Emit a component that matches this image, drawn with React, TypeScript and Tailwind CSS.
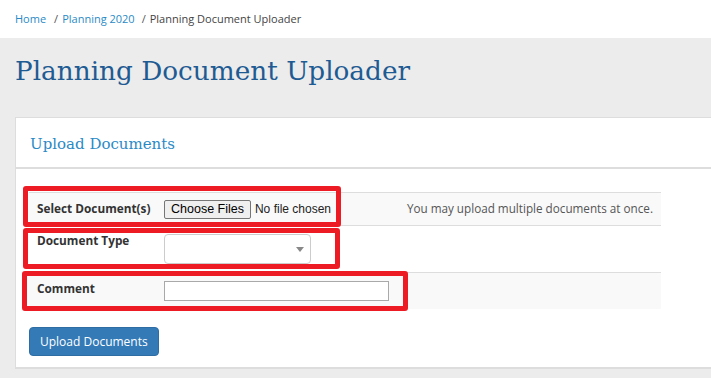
export default function App() {
  return (
    <div className="relative min-h-[378px] w-full overflow-hidden bg-[#ececec] font-['Open_Sans',sans-serif]">
      {/* breadcrumb */}
      <div className="h-[38px] bg-white px-[15px] pt-[11px] text-[11px] text-[#444]">
        <a className="text-[#2a8ac6]">Home</a>
        <span className="pl-[8px] pr-[4px] text-[#555]">/</span>
        <a className="text-[#2a8ac6]">Planning 2020</a>
        <span className="pl-[7px] pr-[4px] text-[#555]">/</span>
        <span>Planning Document Uploader</span>
      </div>

      <div className="h-[79px] px-[15px] pt-[13px]">
        <h1 className="font-['DejaVu_Serif',serif] text-[26.3px] font-normal leading-[40px] text-[#1f5b93]">
          Planning Document Uploader
        </h1>
      </div>

      {/* card */}
      <div className="ml-[15px] w-[760px] border-t border-l border-[#dddddd] border-b-2 bg-white">
        <div className="h-[51px] border-b-2 border-[#dddddd] pl-[14px] pt-[15px]">
          <h2 className="font-['DejaVu_Serif',serif] text-[15px] leading-[22px] text-[#2a8ac6]">Upload Documents</h2>
        </div>

        <div className="px-[13px] pt-[23px] pb-[11px]">
          <table className="w-[632px] border-collapse text-[11.8px] text-[#333]">
            <tbody>
              <tr className="h-[33px] border-t border-b border-[#dddddd] bg-[#f9f9f9]">
                <td className="w-[135px] px-[8px] font-bold">Select Document(s)</td>
                <td className="px-0 py-[6px]">
                  <div className="flex items-center gap-[4px] font-['Liberation_Sans',sans-serif] text-[12.5px]">
                    <span className="flex h-[19px] items-center rounded-[2px] border border-[#767676] bg-[#efefef] px-[6px] text-black">
                      Choose Files
                    </span>
                    <span className="text-[12px] text-[#222]">No file chosen</span>
                  </div>
                </td>
                <td className="px-[8px] text-right text-[11.7px] text-[#555]">You may upload multiple documents at once.</td>
              </tr>
              <tr className="h-[46px] border-b border-[#dddddd] bg-white">
                <td className="px-[8px] pt-[6px] align-top font-bold">Document Type</td>
                <td className="py-[8px] align-top" colSpan={2}>
                  <div className="relative h-[30px] w-[147px] rounded-[4px] border border-[#cccccc] bg-white">
                    <span className="absolute right-[6px] top-[12px] h-0 w-0 border-x-[4px] border-t-[5px] border-x-transparent border-t-[#888]" />
                  </div>
                </td>
              </tr>
              <tr className="h-[36px] bg-[#f9f9f9]">
                <td className="px-[8px] pt-[7px] align-top font-bold">Comment</td>
                <td className="py-[8px] align-top" colSpan={2}>
                  <div className="h-[20px] w-[225px] border border-[#a9a9a9] bg-white" />
                </td>
              </tr>
            </tbody>
          </table>

          <button className="mt-[18px] h-[29px] rounded-[4px] border border-[#2e6da4] bg-[#337ab7] px-[10px] text-[12px] text-white">
            Upload Documents
          </button>
        </div>
      </div>

      {/* red annotation boxes */}
      <div className="pointer-events-none absolute left-[23px] top-[186px] h-[41px] w-[318px] rounded-[3px] border-[5px] border-[#ed1c24]" />
      <div className="pointer-events-none absolute left-[23px] top-[228px] h-[41px] w-[317px] rounded-[3px] border-[5px] border-[#ed1c24]" />
      <div className="pointer-events-none absolute left-[22px] top-[271px] h-[40px] w-[386px] rounded-[3px] border-[5px] border-[#ed1c24]" />
    </div>
  );
}
